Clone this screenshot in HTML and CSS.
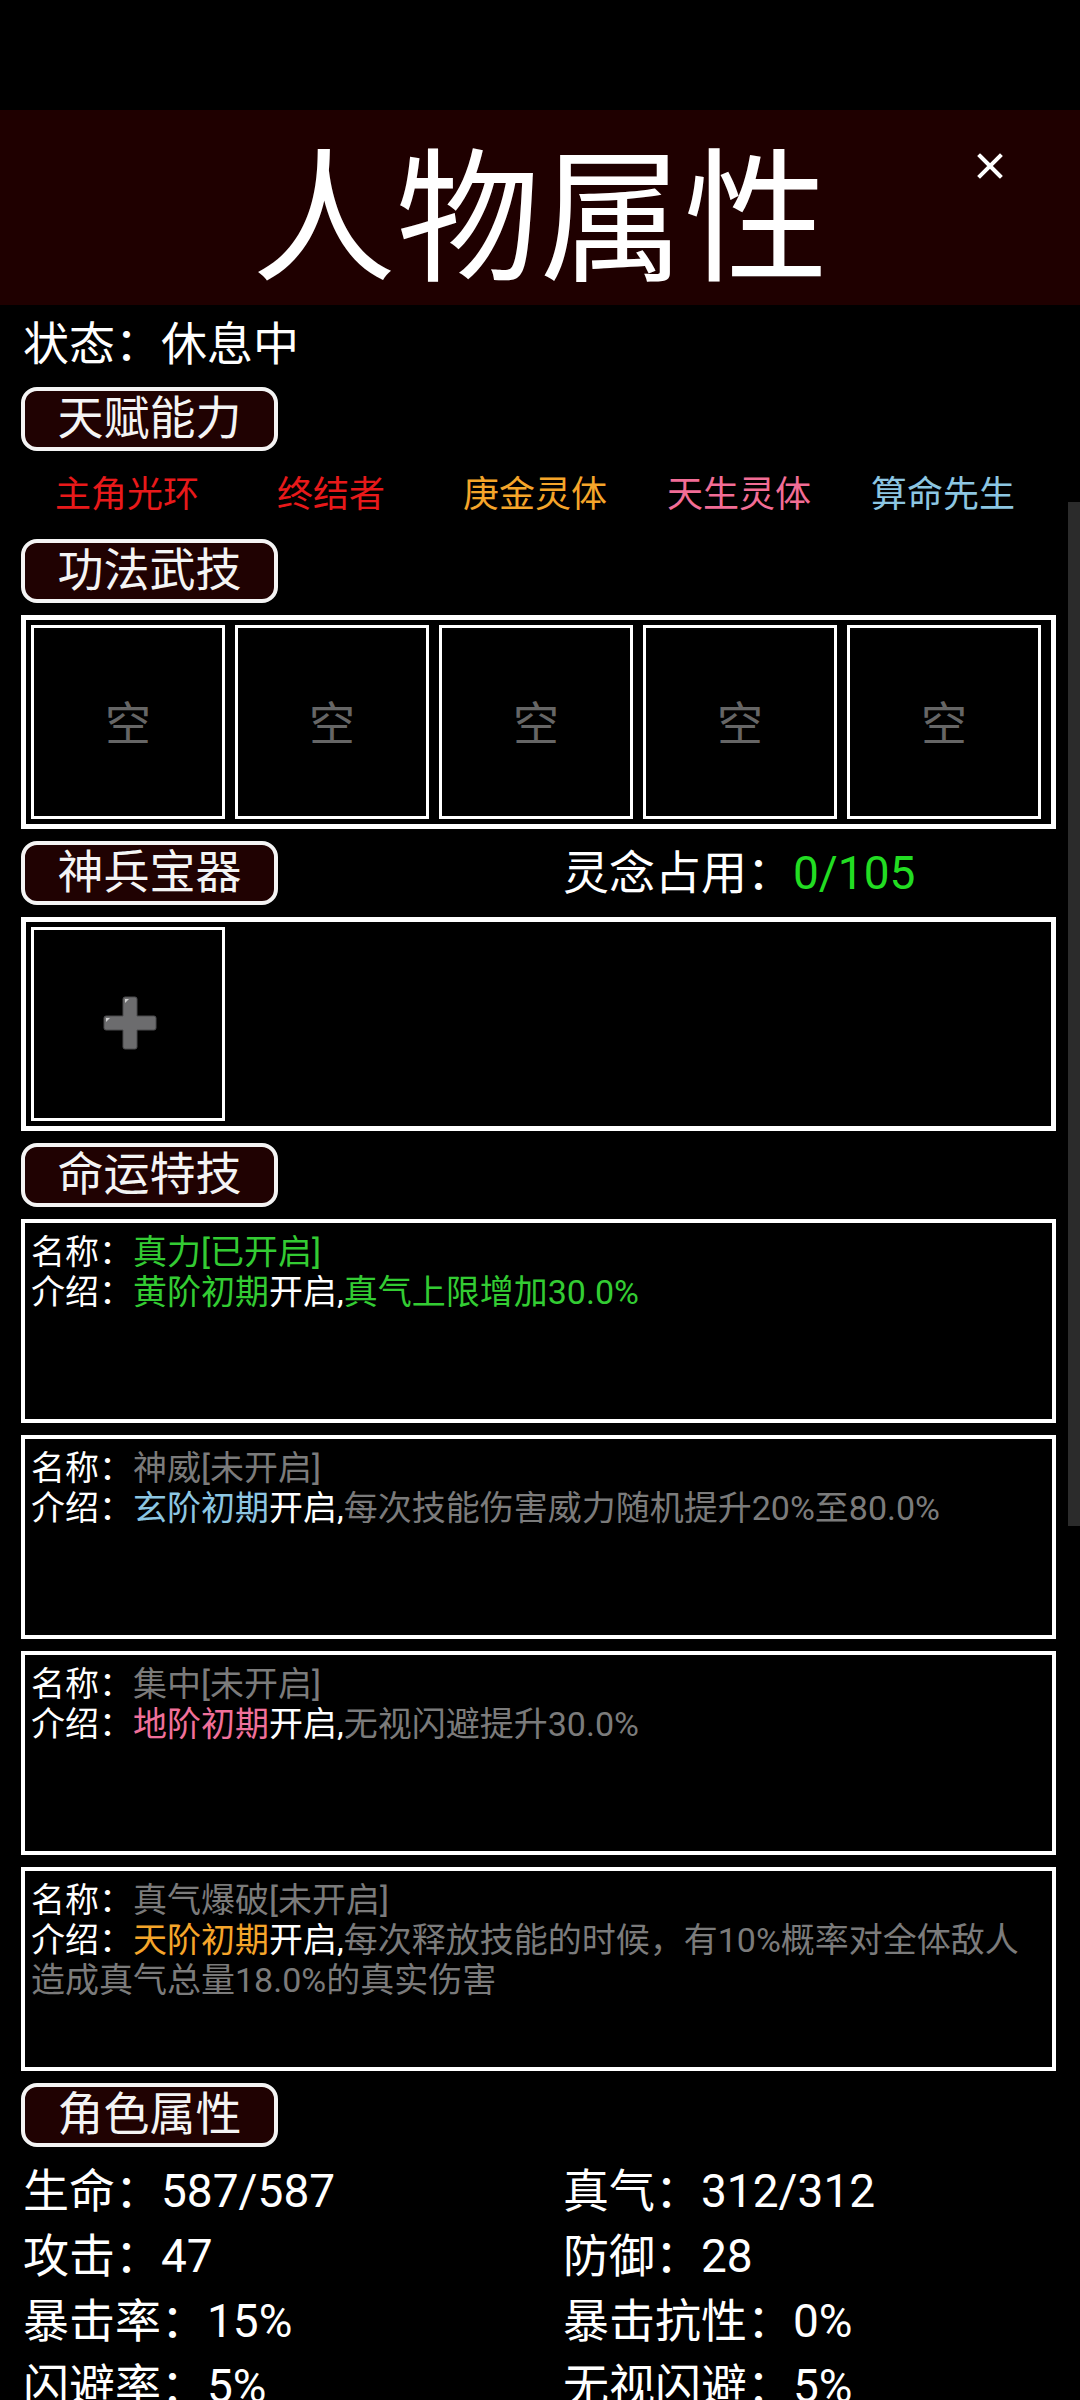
FILE: index.html
```html
<!DOCTYPE html>
<html lang="zh-CN">
<head>
<meta charset="utf-8">
<title>人物属性</title>
<link rel="stylesheet" href="styles.css">
</head>
<body>
<div class="statusbar"></div>
<header class="header">
  <h1 class="title">人物属性</h1>
  <button class="close" aria-label="关闭">
    <svg viewBox="0 0 26 26" width="26" height="26"><path d="M3 3 L23 23 M23 3 L3 23" stroke="#ffffff" stroke-width="4" stroke-linecap="square" fill="none"/></svg>
  </button>
</header>
<main class="content">
  <div class="state">状态：休息中</div>

  <div class="tag">天赋能力</div>
  <div class="talents">
    <span class="t-red">主角光环</span>
    <span class="t-red">终结者</span>
    <span class="t-orange">庚金灵体</span>
    <span class="t-pink">天生灵体</span>
    <span class="t-blue">算命先生</span>
  </div>

  <div class="tag">功法武技</div>
  <div class="box">
    <div class="slot"><span class="empty">空</span></div>
    <div class="slot"><span class="empty">空</span></div>
    <div class="slot"><span class="empty">空</span></div>
    <div class="slot"><span class="empty">空</span></div>
    <div class="slot"><span class="empty">空</span></div>
  </div>

  <div class="tag-row">
    <div class="tag">神兵宝器</div>
    <div class="spirit">灵念占用：<span class="green">0/105</span></div>
  </div>
  <div class="box">
    <div class="slot">
      <svg class="plus" viewBox="0 0 54 54" width="54" height="54">
        <path d="M22 1 H32 Q34 1 34 3 V20 H51 Q53 20 53 22 V32 Q53 34 51 34 H34 V51 Q34 53 32 53 H22 Q20 53 20 51 V34 H3 Q1 34 1 32 V22 Q1 20 3 20 H20 V3 Q20 1 22 1 Z" fill="#6c6c6e" stroke="#4a4a4c" stroke-width="1"/>
        <path d="M22 3 L26 3 L22 7 Z" fill="#cfcfcf"/>
        <path d="M3 22 L7 22 L3 26 Z" fill="#cfcfcf"/>
      </svg>
    </div>
  </div>

  <div class="tag">命运特技</div>
  <div class="card">
    <p><span class="w">名称：</span><span class="green2">真力[已开启]</span></p>
    <p><span class="w">介绍：</span><span class="green2">黄阶初期</span><span class="w">开启,</span><span class="green2">真气上限增加30.0%</span></p>
  </div>
  <div class="card">
    <p><span class="w">名称：</span><span class="gray">神威[未开启]</span></p>
    <p><span class="w">介绍：</span><span class="blue">玄阶初期</span><span class="w">开启,</span><span class="gray">每次技能伤害威力随机提升20%至80.0%</span></p>
  </div>
  <div class="card">
    <p><span class="w">名称：</span><span class="gray">集中[未开启]</span></p>
    <p><span class="w">介绍：</span><span class="pink">地阶初期</span><span class="w">开启,</span><span class="gray">无视闪避提升30.0%</span></p>
  </div>
  <div class="card">
    <p><span class="w">名称：</span><span class="gray">真气爆破[未开启]</span></p>
    <p><span class="w">介绍：</span><span class="orange">天阶初期</span><span class="w">开启,</span><span class="gray">每次释放技能的时候，有10%概率对全体敌人造成真气总量18.0%的真实伤害</span></p>
  </div>

  <div class="tag">角色属性</div>
  <div class="stats">
    <div>生命：587/587</div>
    <div>真气：312/312</div>
    <div>攻击：47</div>
    <div>防御：28</div>
    <div>暴击率：15%</div>
    <div>暴击抗性：0%</div>
    <div>闪避率：5%</div>
    <div>无视闪避：5%</div>
  </div>
</main>
<div class="scrollbar"></div>
</body>
</html>
```

FILE: styles.css
```css
* { box-sizing: border-box; }

html, body {
  margin: 0;
  padding: 0;
  background: #000000;
}

body {
  position: relative;
  width: 1080px;
  height: 2400px;
  overflow: hidden;
  color: #ffffff;
  font-family: Roboto, "Noto Sans CJK SC", "Noto Sans", sans-serif;
}

.statusbar {
  height: 110px;
  background: #000000;
}

.header {
  position: relative;
  height: 195px;
  background: #1f0000;
}

.title {
  margin: 0;
  font-family: "Noto Sans CJK SC", sans-serif;
  font-weight: 400;
  font-size: 144px;
  line-height: 195px;
  text-align: center;
  color: #ffffff;
}

.close {
  position: absolute;
  left: 977px;
  top: 43px;
  width: 26px;
  height: 26px;
  padding: 0;
  border: 0;
  background: none;
  display: block;
}

.close svg { display: block; }

.content {
  display: flex;
  flex-direction: column;
  align-items: stretch;
  gap: 12px;
  padding: 8px 24px 0 21px;
}

.state {
  font-size: 46px;
  line-height: 62px;
  padding-left: 2px;
}

.tag {
  width: 257px;
  height: 64px;
  border: 4px solid #f4f4f4;
  border-radius: 16px;
  background: #200202;
  color: #f4f4f4;
  font-size: 46px;
  line-height: 54px;
  text-align: center;
}

.tag-row {
  display: grid;
  grid-template-columns: 540px 1fr;
  align-items: center;
}

.spirit {
  font-size: 46px;
  line-height: 64px;
  padding-left: 2px;
}

.green { color: #22dd22; }

.talents {
  display: grid;
  grid-template-columns: repeat(5, 204px);
  padding-left: 4px;
  font-size: 36px;
  line-height: 64px;
  justify-items: center;
}

.t-red { color: #e8191a; }
.t-orange { color: #f5a52a; }
.t-pink { color: #f26d96; }
.t-blue { color: #8cc6e2; }

.box {
  display: flex;
  height: 214px;
  border: 5px solid #ffffff;
  background: #000000;
}

.slot {
  width: 194px;
  height: 194px;
  margin: 5px;
  border: 3px solid #ffffff;
  display: flex;
  align-items: center;
  justify-content: center;
}

.empty {
  display: block;
  color: #666666;
  font-size: 46px;
  line-height: 46px;
  padding-bottom: 5px;
  font-family: "Noto Sans CJK SC", sans-serif;
}

.plus { display: block; margin: 0 0 2px 3px; }

.card {
  height: 204px;
  border: 4px solid #ffffff;
  padding: 9px 6px 0 6px;
  font-size: 34px;
  line-height: 40px;
}

.card p { margin: 0; }

.w { color: #ffffff; }
.green2 { color: #33cc33; }
.gray { color: #7b7b7b; }
.blue { color: #8cc6e2; }
.pink { color: #f0709a; }
.orange { color: #f5a52a; }

.stats {
  display: grid;
  grid-template-columns: 540px 1fr;
  grid-auto-rows: 65px;
  font-size: 46px;
  line-height: 65px;
  padding-left: 2px;
}

.scrollbar {
  position: absolute;
  top: 502px;
  right: 0;
  width: 12px;
  height: 1024px;
  background: #2b2b2b;
}
```
